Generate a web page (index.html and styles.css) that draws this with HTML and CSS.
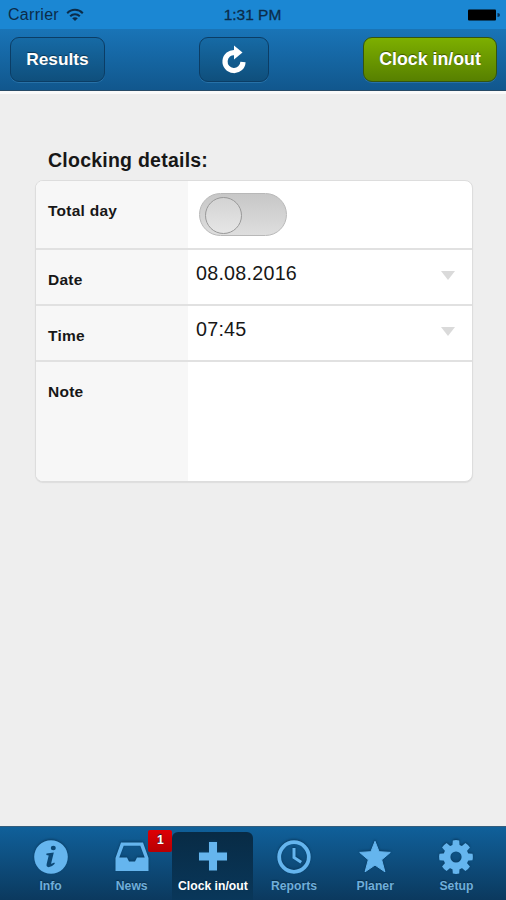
FILE: index.html
```html
<!DOCTYPE html>
<html lang="en">
<head>
<meta charset="utf-8">
<meta name="viewport" content="width=device-width, initial-scale=1">
<title>Clocking details</title>
<link rel="stylesheet" href="styles.css">
</head>
<body>
<div class="app">
  <div class="status">
    <div class="carrier"><span>Carrier</span>
      <svg width="18" height="14" viewBox="0 0 18 14" fill="none" stroke="#0b2c49" stroke-width="2"><path d="M1.2 5.2C5.5.6 12.5.6 16.8 5.2M4.2 8.3C6.9 5.5 11.1 5.5 13.8 8.3"/><path d="M9 13 6.2 10.2C7.8 8.8 10.2 8.8 11.8 10.2Z" fill="#0b2c49" stroke="none"/></svg>
    </div>
    <div class="clock">1:31 PM</div>
    <div class="power"><svg width="34" height="12" viewBox="0 0 34 12"><rect x="1" y=".5" width="28" height="11" rx="1" fill="#000"/><path d="M30.5 4Q33 4 33 6T30.5 8Z" fill="#073052"/></svg></div>
  </div>
  <header class="toolbar">
    <button class="btn results">Results</button>
    <button class="btn refresh" aria-label="Refresh">
      <svg width="26" height="30" viewBox="0 0 26 30"><path d="M14 8.6A9 9 0 1 0 22 18" fill="none" stroke="#fff" stroke-width="5.2"/><path d="M13 1.5 21.5 8.6 13 15.5Z" fill="#fff"/></svg>
    </button>
    <button class="btn submit">Clock in/out</button>
  </header>
  <main class="content">
    <h1>Clocking details:</h1>
    <section class="card">
      <div class="row total"><div class="label">Total day</div><div class="value"><div class="switch"><div class="thumb"></div></div></div></div>
      <div class="row"><div class="label">Date</div><div class="value"><span>08.08.2016</span><i class="arrow"></i></div></div>
      <div class="row"><div class="label">Time</div><div class="value"><span>07:45</span><i class="arrow"></i></div></div>
      <div class="row note"><div class="label">Note</div><div class="value"></div></div>
    </section>
  </main>
  <nav class="tabs">
    <div class="tab">
      <svg viewBox="0 0 36 36"><circle cx="18" cy="18" r="16.8"/><g class="cut"><ellipse cx="20.3" cy="9" rx="2.5" ry="2.3"/><path d="M13.5 14.5 20.8 13.5 18.2 24.2Q18 25.5 21.3 23.6L21.8 24.7Q18.5 28.2 15.6 28.2 12.9 28 13.7 24.8L15.7 16.4 13.3 16Z"/></g></svg>
      <span>Info</span>
    </div>
    <div class="tab">
      <svg viewBox="0 0 36 36"><path fill-rule="evenodd" d="M7 3.5H29L34.5 19V32H1.5V19ZM9.7 6.7 5.3 18.5H13L15 22.5H21L23 18.5H30.7L26.3 6.7Z"/></svg>
      <span>News</span><b class="badge">1</b>
    </div>
    <div class="tab active">
      <svg viewBox="0 0 36 36"><path d="M14 3H22V13.5H32V21.5H22V31.5H14V21.5H4V13.5H14Z"/></svg>
      <span>Clock in/out</span>
    </div>
    <div class="tab">
      <svg viewBox="0 0 36 36"><g fill="none" stroke="#65b5ee"><circle cx="18" cy="18" r="14.8" stroke-width="3.8"/><path d="M18 9V18.5L25.2 23.2" stroke-width="3"/></g></svg>
      <span>Reports</span>
    </div>
    <div class="tab">
      <svg viewBox="0 0 36 36"><path stroke="#65b5ee" stroke-linejoin="round" d="M18 2.3 22.1 12.7 33.3 13.4 24.7 20.8 27.9 32.8 18 26.1 8.1 32.8 11.3 20.8 2.7 13.4 13.9 12.7Z"/></svg>
      <span>Planer</span>
    </div>
    <div class="tab">
      <svg viewBox="0 0 36 36"><circle cx="18" cy="18" r="9.1" fill="none" stroke="#65b5ee" stroke-width="7"/><g><path id="tooth" d="M14.3 8 14.8 1.5Q18 .7 21.2 1.5L21.7 8Z"/><use href="#tooth" transform="rotate(45 18 18)"/><use href="#tooth" transform="rotate(90 18 18)"/><use href="#tooth" transform="rotate(135 18 18)"/><use href="#tooth" transform="rotate(180 18 18)"/><use href="#tooth" transform="rotate(225 18 18)"/><use href="#tooth" transform="rotate(270 18 18)"/><use href="#tooth" transform="rotate(315 18 18)"/></g></svg>
      <span>Setup</span>
    </div>
  </nav>
</div>
</body>
</html>
```
FILE: styles.css
```css
* { box-sizing: border-box; }
body { margin: 0; font-family: "Liberation Sans", Arial, sans-serif; color: #171717; }
.app { width: 506px; height: 900px; display: flex; flex-direction: column; background: #eee; overflow: hidden; }
.status { height: 29px; flex: none; background: #1b87d3; display: grid; grid-template-columns: 1fr auto 1fr; align-items: center; padding: 0 5px 0 8px; color: #0b2c49; }
.carrier { display: flex; align-items: center; gap: 7px; font-size: 16px; letter-spacing: .3px; }
.clock { margin-right: 4px; font-size: 15.5px; -webkit-text-stroke: .3px #0b2c49; }
.power { display: flex; justify-content: flex-end; }
.toolbar { height: 62px; flex: none; display: flex; justify-content: space-between; align-items: flex-start; padding: 8px 9px 0 10px; background: linear-gradient(#1974b7, #11578d); border-bottom: 1px solid #274a66; }
.btn { height: 45px; padding: 0 0 1px; border: 1.5px solid #0b3d65; border-radius: 9px; background: linear-gradient(#166aa5, #0f4f7c); color: #fff; font: bold 17.8px "Liberation Sans", Arial, sans-serif; text-shadow: 0 -1px 1px rgba(0,0,0,.45); box-shadow: 0 1px 0 rgba(90,170,220,.3); }
.results { width: 95px; font-size: 17.3px; }
.refresh { width: 70px; display: flex; align-items: center; justify-content: center; }
.submit { width: 134px; background: linear-gradient(#7daf00, #578000); border-color: #34540f; }
.content { flex: 1; padding: 55px 34px 0 35px; border-top: 3px solid #fafafa; }
h1 { margin: 0 0 8px 13px; font-size: 19.5px; letter-spacing: .24px; line-height: 23px; }
.card { width: 438px; border: 1px solid #ddd; border-radius: 8px; overflow: hidden; background: #fff; box-shadow: 0 1px 1px #ddd; }
.row { height: 56px; display: grid; grid-template-columns: 152px 1fr; border-bottom: 2px solid #e1e1e1; }
.row.total { height: 69px; }
.row.note { height: 119px; border: 0; }
.label { background: #f7f7f7; padding: 21px 0 0 12px; font-size: 15.5px; letter-spacing: .25px; font-weight: bold; line-height: 18px; }
.value { display: flex; align-items: flex-start; justify-content: space-between; padding: 12px 17px 0 8px; font-size: 19.7px; letter-spacing: .25px; line-height: 23px; }
.arrow { width: 0; height: 0; margin-top: 9px; border: 7px solid transparent; border-top: 9px solid #dadada; border-bottom: 0; }
.switch { width: 88px; height: 43px; margin-left: 3px; padding: 3px 5px; border: 1px solid #b8b8b8; border-radius: 22px; background: linear-gradient(#c7c7c7, #dedede); }
.thumb { width: 37px; height: 37px; border: 1.5px solid #999; border-radius: 50%; background: linear-gradient(#d3d3d3, #e6e6e6); }
.tabs { height: 74px; flex: none; display: grid; grid-template-columns: repeat(6, 1fr); padding: 5px 9px 0 10px; background: linear-gradient(#10609a, #0b395e); border-top: 1px solid #345d7c; }
.tab { position: relative; display: flex; flex-direction: column; align-items: center; padding-top: 7px; color: #70aeda; font-size: 12.2px; font-weight: bold; line-height: 14px; text-shadow: 0 -1px 1px #082d49; }
.tab svg { width: 36px; height: 36px; margin-bottom: 4px; fill: #65b5ee; filter: drop-shadow(0 -1px 1px #083b62); }
.cut { fill: #0c4875; }
.active { color: #fff; background: linear-gradient(#082b45, #09375a); border-radius: 6px 6px 0 0; white-space: nowrap; }
.badge { position: absolute; top: -2px; right: 0; width: 24px; height: 22px; border-radius: 2px; background: linear-gradient(#df0004, #b60003); color: #fff; text-align: center; line-height: 21px; }
```
